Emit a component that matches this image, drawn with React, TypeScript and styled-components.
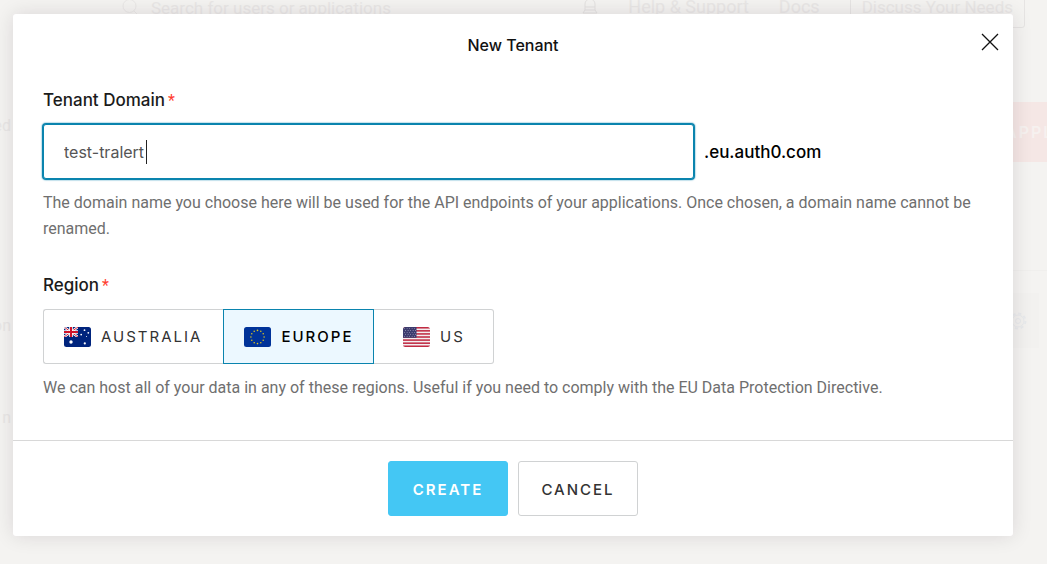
import React, { useState } from 'react';
import styled, { createGlobalStyle, css } from 'styled-components';

const GlobalStyle = createGlobalStyle`
  *, *::before, *::after { box-sizing: border-box; }
  html, body { margin: 0; min-height: 100%; background: #f4f3f1; }
  body { font-family: Roboto, "Liberation Sans", sans-serif; color: #1e1e1e; }
  button, input { font: inherit; }
`;

const displayFont = 'Inter, "Liberation Sans", sans-serif';

const Page = styled.div`
  position: relative;
  min-height: 100vh;
  overflow: hidden;
`;

const Dashboard = styled.div`
  color: #e9e7e6;
  font-size: 17px;
  line-height: 24px;
`;

const TopBar = styled.header`
  display: flex;
  align-items: flex-start;
  justify-content: space-between;
  height: 28px;
  padding: 0 22px 0 122px;
`;

const SearchHint = styled.div`
  display: flex;
  align-items: center;
  gap: 12px;
  height: 16px;
`;

const TopLinks = styled.nav`
  display: flex;
  align-items: center;
  gap: 30px;
  height: 14px;
  font-size: 18px;
`;

const TopLink = styled.a<{ $boxed?: boolean }>`
  color: inherit;
  text-decoration: none;
  white-space: nowrap;
  ${(p) =>
    p.$boxed &&
    css`
      padding: 8px 11px;
      border: 1px solid #e6e4e3;
      border-radius: 3px;
      font-size: 17px;
    `}
`;

const Workspace = styled.div`
  display: flex;
  justify-content: space-between;
  padding-top: 74px;
`;

const SideMenu = styled.nav`
  display: flex;
  flex-direction: column;
  align-items: flex-end;
  width: 11px;
  padding-top: 12px;
  font-size: 16px;
`;

const SideItem = styled.a<{ $space: number }>`
  margin-bottom: ${(p) => p.$space}px;
  color: inherit;
  text-decoration: none;
`;

const MainColumn = styled.div`
  width: 46px;
`;

const CreateAppButton = styled.button`
  height: 60px;
  padding: 0 4px;
  border: 0;
  background: #f5e7e5;
  color: #f6f1ef;
  font-family: ${displayFont};
  font-size: 16px;
  font-weight: 600;
  letter-spacing: 2px;
`;

const AppRow = styled.div`
  display: flex;
  align-items: center;
  margin-top: 108px;
  padding: 22px 8px;
  border-top: 1px solid #f0efed;
`;

const SettingsTile = styled.div`
  display: flex;
  align-items: center;
  width: 30px;
  height: 55px;
  background: #f2f1ef;
`;

const Overlay = styled.div`
  position: absolute;
  inset: 0;
  padding: 14px 34px 28px 13px;
`;

const Dialog = styled.form`
  position: relative;
  max-width: 1000px;
  margin: 0 auto;
  border-radius: 3px;
  background: #fff;
  box-shadow: 0 0 20px rgba(30, 20, 30, 0.12);
`;

const DialogHeader = styled.header`
  padding: 19px 30px 0;
  text-align: center;
`;

const Title = styled.h1`
  margin: 0;
  color: #111;
  font-family: ${displayFont};
  font-size: 16px;
  font-weight: 500;
  line-height: 24px;
`;

const CloseButton = styled.button`
  position: absolute;
  top: 16px;
  right: 11px;
  display: flex;
  padding: 0;
  border: 0;
  background: none;
  cursor: pointer;
`;

const DialogBody = styled.div`
  display: flex;
  flex-direction: column;
  gap: 31px;
  padding: 31px 30px 39px;
`;

const Field = styled.div`
  min-width: 0;
`;

const fieldLabel = css`
  display: block;
  padding: 0;
  color: #1b1b1b;
  font-family: ${displayFont};
  font-size: 17px;
  font-weight: 500;
  line-height: 24px;
`;

const FieldLabel = styled.label`
  ${fieldLabel}
`;

const GroupLabel = styled.div`
  ${fieldLabel}
`;

const Required = styled.span`
  margin-left: 3px;
  color: #ff3e30;
  font-family: Roboto, sans-serif;
  font-size: 16px;
  font-weight: 400;
  line-height: 1;
`;

const DomainRow = styled.div`
  display: flex;
  align-items: center;
  gap: 10px;
  margin-top: 12px;
`;

const InputShell = styled.div`
  position: relative;
  flex: 0 1 651px;
  min-width: 0;
`;

const DomainInput = styled.input`
  display: block;
  width: 100%;
  height: 55px;
  padding: 0 20px;
  border: 1px solid #0a84ae;
  border-radius: 3px;
  outline: none;
  background: #fff;
  box-shadow: 0 0 0 1px #0a84ae, 0 0 1px 2px rgba(10, 132, 174, 0.25);
  color: #555;
  caret-color: transparent;
  font-family: ${displayFont};
  font-size: 16px;
  line-height: 24px;
`;

const Caret = styled.span`
  position: absolute;
  top: 16px;
  left: 103px;
  width: 1px;
  height: 24px;
  background: #222;
`;

const Suffix = styled.span`
  color: #000;
  font-family: ${displayFont};
  font-size: 17px;
  font-weight: 500;
`;

const Help = styled.p`
  margin: 11px 0 0;
  color: #6f6f6f;
  font-size: 16px;
  line-height: 26px;
`;

const RegionGroup = styled.div`
  display: flex;
  margin-top: 12px;
`;

const RegionOption = styled.label<{ $active: boolean }>`
  position: relative;
  display: flex;
  align-items: center;
  justify-content: center;
  gap: 10px;
  min-width: 120px;
  height: 55px;
  padding: 0 20px;
  border: 1px solid ${(p) => (p.$active ? '#0a84ae' : '#d0d2d3')};
  background: ${(p) => (p.$active ? '#ecf8ff' : '#fff')};
  color: ${(p) => (p.$active ? '#000' : '#333')};
  font-family: ${displayFont};
  font-size: 15px;
  font-weight: ${(p) => (p.$active ? 500 : 400)};
  letter-spacing: 2px;
  text-transform: uppercase;
  cursor: pointer;

  &:first-child { border-right-width: ${(p) => (p.$active ? 1 : 0)}px; border-radius: 3px 0 0 3px; padding-right: 21px; }
  &:last-child { border-left-width: ${(p) => (p.$active ? 1 : 0)}px; border-radius: 0 3px 3px 0; }
`;

const HiddenRadio = styled.input`
  position: absolute;
  inset: 0;
  width: 100%;
  height: 100%;
  margin: 0;
  opacity: 0;
  cursor: pointer;
`;

const DialogFooter = styled.footer`
  display: flex;
  justify-content: center;
  gap: 10px;
  padding: 20px;
  border-top: 1px solid #d8d8d8;
`;

const ActionButton = styled.button<{ $primary?: boolean }>`
  width: 120px;
  height: 55px;
  padding: 2px 0 0;
  border: 1px solid ${(p) => (p.$primary ? '#44c7f4' : '#d0d2d3')};
  border-radius: 3px;
  background: ${(p) => (p.$primary ? '#44c7f4' : '#fff')};
  color: ${(p) => (p.$primary ? '#fff' : '#333')};
  font-family: ${displayFont};
  font-size: 15px;
  font-weight: ${(p) => (p.$primary ? 600 : 500)};
  letter-spacing: 2px;
  text-transform: uppercase;
  cursor: pointer;
`;

function AustraliaFlag() {
  return (
    <svg width="27" height="20" viewBox="0 0 27 20" aria-hidden="true">
      <clipPath id="au-clip"><rect width="27" height="20" rx="2.5" /></clipPath>
      <clipPath id="au-canton"><rect width="14" height="10" /></clipPath>
      <g clipPath="url(#au-clip)">
        <rect width="27" height="20" fill="#00247d" />
        <g clipPath="url(#au-canton)">
          <path d="M0 0 14 10M14 0 0 10" stroke="#fff" strokeWidth="2.4" />
          <path d="M0 0 14 10M14 0 0 10" stroke="#cf142b" strokeWidth="0.9" />
          <path d="M7 0V10M0 5H14" stroke="#fff" strokeWidth="3.6" />
          <path d="M7 0V10M0 5H14" stroke="#cf142b" strokeWidth="2" />
        </g>
        <g fill="#fff">
          <circle cx="7" cy="15" r="1.7" />
          <circle cx="20.5" cy="3.2" r="0.9" />
          <circle cx="17.2" cy="7.6" r="0.9" />
          <circle cx="24.3" cy="5.8" r="0.9" />
          <circle cx="22.5" cy="9.6" r="0.5" />
          <circle cx="20.8" cy="16.4" r="1.1" />
        </g>
      </g>
    </svg>
  );
}

function EuropeFlag() {
  const stars = Array.from({ length: 12 }, (_, i) => {
    const a = (i * Math.PI) / 6;
    return { x: 13.5 + 6.6 * Math.sin(a), y: 10 - 6.6 * Math.cos(a) };
  });
  return (
    <svg width="27" height="20" viewBox="0 0 27 20" aria-hidden="true">
      <rect width="27" height="20" rx="2.5" fill="#003399" />
      {stars.map((s, i) => (
        <circle key={i} cx={s.x} cy={s.y} r="0.8" fill="#d9c322" />
      ))}
    </svg>
  );
}

function UsFlag() {
  return (
    <svg width="27" height="20" viewBox="0 0 27 20" aria-hidden="true">
      <clipPath id="us-clip"><rect width="27" height="20" rx="2.5" /></clipPath>
      <g clipPath="url(#us-clip)">
        <rect width="27" height="20" fill="#f3eef0" />
        {[0, 1, 2, 3, 4, 5, 6].map((i) => (
          <rect key={i} y={i * 3.08} width="27" height="1.54" fill="#c02b43" />
        ))}
        <rect width="13.5" height="10.8" fill="#3c3b6e" />
        <g fill="#c9c9dc">
          {[1.6, 3.5, 5.4, 7.3, 9.2].map((y, r) =>
            [1.6, 4.1, 6.6, 9.1, 11.6].map((x) => (
              <circle key={`${x}-${y}`} cx={x + (r % 2 ? 1 : 0)} cy={y} r="0.45" />
            )),
          )}
        </g>
      </g>
    </svg>
  );
}

const regions = [
  { id: 'au', name: 'Australia', Flag: AustraliaFlag },
  { id: 'eu', name: 'Europe', Flag: EuropeFlag },
  { id: 'us', name: 'US', Flag: UsFlag },
];

export default function App() {
  const [domain, setDomain] = useState('test-tralert');
  const [region, setRegion] = useState('eu');

  return (
    <Page>
      <GlobalStyle />
      <Dashboard aria-hidden="true">
        <TopBar>
          <SearchHint>
            <svg width="17" height="17" viewBox="0 0 17 17" fill="none" stroke="#e9e7e6">
              <circle cx="7.5" cy="6" r="6.5" />
              <path d="m12 11 4 4" />
            </svg>
            Search for users or applications
          </SearchHint>
          <TopLinks>
            <svg width="16" height="18" viewBox="0 0 16 18" fill="none" stroke="#e3e1e0">
              <path d="M3 12V6a5 5 0 0 1 10 0v6l2 3H1l2-3ZM3 9h10M3 12h10" />
            </svg>
            <TopLink href="#help">Help &amp; Support</TopLink>
            <TopLink href="#docs">Docs</TopLink>
            <TopLink href="#contact" $boxed>Discuss Your Needs</TopLink>
          </TopLinks>
        </TopBar>
        <Workspace>
          <SideMenu>
            <SideItem href="#connected" $space={176}>ed</SideItem>
            <SideItem href="#authentication" $space={68}>on</SideItem>
            <SideItem href="#system" $space={0}>n</SideItem>
          </SideMenu>
          <MainColumn>
            <CreateAppButton type="button">APPL</CreateAppButton>
            <AppRow>
              <SettingsTile>
                <svg width="18" height="18" viewBox="0 0 18 18" fill="none" stroke="#e8eaec">
                  <circle cx="9" cy="9" r="2.5" />
                  <circle cx="9" cy="9" r="6" />
                  <circle cx="9" cy="9" r="7.5" strokeWidth="2" strokeDasharray="3 2.9" />
                </svg>
              </SettingsTile>
            </AppRow>
          </MainColumn>
        </Workspace>
      </Dashboard>

      <Overlay>
        <Dialog role="dialog" aria-labelledby="dialog-title" onSubmit={(e) => e.preventDefault()}>
          <DialogHeader>
            <Title id="dialog-title">New Tenant</Title>
          </DialogHeader>
          <CloseButton type="button" aria-label="Close">
            <svg width="24" height="24" viewBox="0 0 24 24" fill="none" stroke="#111" strokeWidth="1.3">
              <path d="M4 4 20 20M20 4 4 20" />
            </svg>
          </CloseButton>

          <DialogBody>
            <Field>
              <FieldLabel htmlFor="tenant-domain">
                Tenant Domain<Required>*</Required>
              </FieldLabel>
              <DomainRow>
                <InputShell>
                  <DomainInput
                    id="tenant-domain"
                    type="text"
                    value={domain}
                    onChange={(e) => setDomain(e.target.value)}
                  />
                  <Caret aria-hidden="true" />
                </InputShell>
                <Suffix>.eu.auth0.com</Suffix>
              </DomainRow>
              <Help>
                The domain name you choose here will be used for the API endpoints of your
                applications. Once chosen, a domain name cannot be renamed.
              </Help>
            </Field>

            <Field role="radiogroup" aria-labelledby="region-label">
              <GroupLabel id="region-label">
                Region<Required>*</Required>
              </GroupLabel>
              <RegionGroup>
                {regions.map(({ id, name, Flag }) => (
                  <RegionOption key={id} $active={id === region}>
                    <HiddenRadio
                      type="radio"
                      name="region"
                      value={id}
                      checked={id === region}
                      onChange={() => setRegion(id)}
                    />
                    <Flag />
                    {name}
                  </RegionOption>
                ))}
              </RegionGroup>
              <Help>
                We can host all of your data in any of these regions. Useful if you need to comply
                with the EU Data Protection Directive.
              </Help>
            </Field>
          </DialogBody>

          <DialogFooter>
            <ActionButton type="submit" $primary>Create</ActionButton>
            <ActionButton type="button">Cancel</ActionButton>
          </DialogFooter>
        </Dialog>
      </Overlay>
    </Page>
  );
}
